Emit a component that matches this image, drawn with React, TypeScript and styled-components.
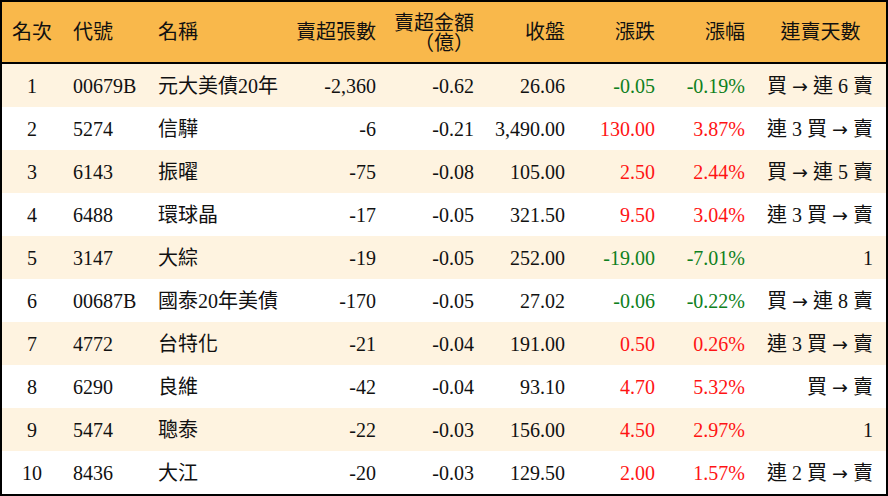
import React from "react";
import styled, { createGlobalStyle, css } from "styled-components";

const GlobalStyle = createGlobalStyle`
  html, body { margin: 0; padding: 0; background: #ffffff; }
  * { box-sizing: border-box; }
  body { font-family: "Liberation Serif", "Noto Sans CJK TC", serif; }
`;

const COLS = "60px 86px 148px 90px 98px 91px 90px 90px 131px";

const Table = styled.div`
  width: 888px;
  height: 496px;
  border: 2px solid #000;
  display: flex;
  flex-direction: column;
  color: #111;
  font-size: 20px;
`;

const HeaderRow = styled.div`
  display: grid;
  grid-template-columns: ${COLS};
  height: 62px;
  background: #f9b84b;
  border-bottom: 2px solid #000;
`;

const Row = styled.div<{ $alt: boolean }>`
  display: grid;
  grid-template-columns: ${COLS};
  height: 43px;
  background: ${(p) => (p.$alt ? "#fef3e0" : "#ffffff")};
`;

type Align = "center" | "left" | "right";

const Cell = styled.div<{ $align: Align; $pad?: number; $tone?: "up" | "down" | "none" }>`
  display: flex;
  align-items: center;
  white-space: pre;
  line-height: 20px;
  ${(p) =>
    p.$align === "center"
      ? css`justify-content: center; text-align: center;`
      : p.$align === "left"
      ? css`justify-content: flex-start; padding-left: ${p.$pad ?? 10}px;`
      : css`justify-content: flex-end; text-align: right; padding-right: ${p.$pad ?? 10}px;`}
  color: ${(p) => (p.$tone === "up" ? "#ff1414" : p.$tone === "down" ? "#0e8020" : "#111")};
`;

const HeadStack = styled.div`
  display: flex;
  flex-direction: column;
  align-items: flex-end;
  padding-top: 1px;
`;

const HeadText = styled.span`
  display: block;
  line-height: 20px;
  height: 20px;
`;

const DaysText = styled.span`
  display: inline-flex;
  align-items: center;
  gap: 5px;
`;

const Arrow = styled.span`
  font-family: "DejaVu Sans", sans-serif;
  font-size: 19px;
  line-height: 20px;
`;

type Rec = {
  rank: string;
  code: string;
  name: string;
  qty: string;
  amt: string;
  close: string;
  chg: string;
  pct: string;
  days: string;
};

const data: Rec[] = [
  { rank: "1", code: "00679B", name: "元大美債20年", qty: "-2,360", amt: "-0.62", close: "26.06", chg: "-0.05", pct: "-0.19%", days: "買 → 連 6 賣" },
  { rank: "2", code: "5274", name: "信驊", qty: "-6", amt: "-0.21", close: "3,490.00", chg: "130.00", pct: "3.87%", days: "連 3 買 → 賣" },
  { rank: "3", code: "6143", name: "振曜", qty: "-75", amt: "-0.08", close: "105.00", chg: "2.50", pct: "2.44%", days: "買 → 連 5 賣" },
  { rank: "4", code: "6488", name: "環球晶", qty: "-17", amt: "-0.05", close: "321.50", chg: "9.50", pct: "3.04%", days: "連 3 買 → 賣" },
  { rank: "5", code: "3147", name: "大綜", qty: "-19", amt: "-0.05", close: "252.00", chg: "-19.00", pct: "-7.01%", days: "1" },
  { rank: "6", code: "00687B", name: "國泰20年美債", qty: "-170", amt: "-0.05", close: "27.02", chg: "-0.06", pct: "-0.22%", days: "買 → 連 8 賣" },
  { rank: "7", code: "4772", name: "台特化", qty: "-21", amt: "-0.04", close: "191.00", chg: "0.50", pct: "0.26%", days: "連 3 買 → 賣" },
  { rank: "8", code: "6290", name: "良維", qty: "-42", amt: "-0.04", close: "93.10", chg: "4.70", pct: "5.32%", days: "買 → 賣" },
  { rank: "9", code: "5474", name: "聰泰", qty: "-22", amt: "-0.03", close: "156.00", chg: "4.50", pct: "2.97%", days: "1" },
  { rank: "10", code: "8436", name: "大江", qty: "-20", amt: "-0.03", close: "129.50", chg: "2.00", pct: "1.57%", days: "連 2 買 → 賣" },
];

const toneOf = (v: string) => (v.startsWith("-") ? "down" : "up") as "up" | "down";

function Days({ text }: { text: string }) {
  const tokens = text.split(" ");
  return (
    <DaysText>
      {tokens.map((t, i) => (t === "→" ? <Arrow key={i}>→</Arrow> : <span key={i}>{t}</span>))}
    </DaysText>
  );
}

export default function App() {
  return (
    <>
      <GlobalStyle />
      <Table>
        <HeaderRow>
          <Cell $align="center">名次</Cell>
          <Cell $align="left" $pad={11}>代號</Cell>
          <Cell $align="left" $pad={10}>名稱</Cell>
          <Cell $align="right">賣超張數</Cell>
          <Cell $align="right">
            <HeadStack>
              <HeadText>賣超金額</HeadText>
              <HeadText>（億）</HeadText>
            </HeadStack>
          </Cell>
          <Cell $align="right">收盤</Cell>
          <Cell $align="right">漲跌</Cell>
          <Cell $align="right">漲幅</Cell>
          <Cell $align="center">連賣天數</Cell>
        </HeaderRow>
        {data.map((r, i) => (
          <Row key={r.rank} $alt={i % 2 === 0}>
            <Cell $align="center">{r.rank}</Cell>
            <Cell $align="left" $pad={11}>{r.code}</Cell>
            <Cell $align="left" $pad={10}>{r.name}</Cell>
            <Cell $align="right">{r.qty}</Cell>
            <Cell $align="right">{r.amt}</Cell>
            <Cell $align="right">{r.close}</Cell>
            <Cell $align="right" $tone={toneOf(r.chg)}>{r.chg}</Cell>
            <Cell $align="right" $tone={toneOf(r.pct)}>{r.pct}</Cell>
            <Cell $align="right" $pad={13}>
              <Days text={r.days} />
            </Cell>
          </Row>
        ))}
      </Table>
    </>
  );
}
